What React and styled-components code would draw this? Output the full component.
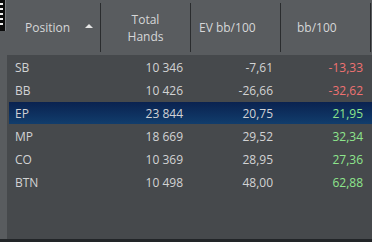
import React from "react";
import styled, { createGlobalStyle } from "styled-components";

const rows = [
    { pos: "SB", hands: "10 346", ev: "-7,61", bb: "-13,33" },
    { pos: "BB", hands: "10 426", ev: "-26,66", bb: "-32,62" },
    { pos: "EP", hands: "23 844", ev: "20,75", bb: "21,95", selected: true },
    { pos: "MP", hands: "18 669", ev: "29,52", bb: "32,34" },
    { pos: "CO", hands: "10 369", ev: "28,95", bb: "27,36" },
    { pos: "BTN", hands: "10 498", ev: "48,00", bb: "62,88" }
]

export default function App() {
    return (
        <>
            <GlobalStyle />
            <Page>
                <Side>
                    <Grip>
                        {[0, 1, 2, 3, 4].map(i => <GripDot key={i} />)}
                    </Grip>
                </Side>
                <Main>
                    <Header>
                        <HeadCell pad="18px">
                            Position
                            <SortArrow />
                        </HeadCell>
                        <HeadCell center>Total<br />Hands</HeadCell>
                        <HeadCell pad="8px">EV bb/100</HeadCell>
                        <HeadCell pad="16px">bb/100</HeadCell>
                    </Header>
                    <Body>
                        {rows.map(r => (
                            <Row key={r.pos} selected={r.selected}>
                                <Label>{r.pos}</Label>
                                <Num>{r.hands}</Num>
                                <Num>{r.ev}</Num>
                                <Num tone={r.bb.startsWith("-") ? "neg" : "pos"}>{r.bb}</Num>
                            </Row>
                        ))}
                    </Body>
                </Main>
            </Page>
            <Footer />
        </>
    )
}

// >

const GlobalStyle = createGlobalStyle`
    html, body {
        margin: 0;
        padding: 0;
        background: #595c5f;
    }
    body {
        font-family: "Open Sans", "Liberation Sans", sans-serif;
        font-size: 12px;
    }
`
const Page = styled.div`
    display: flex;
    height: 239px;
    background: #595c5f;
`
const Side = styled.div`
    width: 7px;
    flex: none;
`
const Grip = styled.div`
    width: 6px;
    height: 31px;
    background: #0c0c0c;
    border-right: 1px solid #7a7d80;
    box-sizing: border-box;
    display: flex;
    flex-direction: column;
    gap: 3px;
    padding-top: 3px;
`
const GripDot = styled.div`
    width: 3px;
    height: 2px;
    background: #f0f0f0;
`
const Main = styled.div`
    flex: 1;
    display: flex;
    flex-direction: column;
    min-width: 0;
`
const Header = styled.div`
    display: grid;
    grid-template-columns: 94px 90px 90px 90px;
    height: 55px;
    padding-top: 3px;
    box-sizing: border-box;
`
const HeadCell = styled.div`
    display: flex;
    align-items: center;
    justify-content: ${p => (p.center ? "center" : "flex-start")};
    text-align: ${p => (p.center ? "center" : "left")};
    padding-left: ${p => p.pad || "0"};
    height: 49px;
    border-right: 1px solid #2a2c2e;
    color: #d6d7d8;
    line-height: 17px;
    position: relative;
`
const SortArrow = styled.span`
    position: absolute;
    left: 78px;
    top: 21px;
    width: 0;
    height: 0;
    border-left: 4px solid transparent;
    border-right: 4px solid transparent;
    border-bottom: 4px solid #e6e6e6;
`
const Body = styled.div`
    flex: 1;
    background: #46494c;
    padding: 1px 0 0 2px;
`
const Row = styled.div`
    display: grid;
    grid-template-columns: 92px 90px 90px 90px;
    height: 22px;
    margin-bottom: 1px;
    align-items: center;
    color: #d2d3d4;
    background: ${p => (p.selected ? "linear-gradient(#0a2250, #113d6c)" : "transparent")};
`
const Label = styled.div`
    padding-left: 6px;
`
const Num = styled.div`
    text-align: right;
    padding-right: 8px;
    color: ${p => (p.tone === "neg" ? "#f07272" : p.tone === "pos" ? "#8ee68c" : "inherit")};
`
const Footer = styled.div`
    height: 3px;
    background: #222528;
`
